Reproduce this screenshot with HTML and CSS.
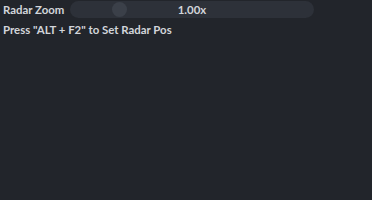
FILE: index.html
```html
<!DOCTYPE html>
<html>
<head>
<meta charset="utf-8">
<link rel="stylesheet" href="styles.css">
</head>
<body>
<div class="panel">
  <div class="row">
    <span class="label">Radar Zoom</span>
    <div class="slider">
      <span class="grab"></span>
      <span class="value">1.00x</span>
    </div>
  </div>
  <div class="hint">Press "ALT + F2" to Set Radar Pos</div>
</div>
</body>
</html>
```
FILE: styles.css
```css
html, body {
  margin: 0;
  padding: 0;
  background: #22252b;
  width: 372px;
  height: 200px;
  overflow: hidden;
}
.panel {
  padding: 1px 0 0 3px;
  font-family: "Lato", sans-serif;
  font-size: 11.4px;
  font-weight: 700;
  color: #d2d5da;
}
.row {
  display: flex;
  align-items: center;
  height: 17px;
}
.label {
  width: 67px;
  white-space: nowrap;
}
.slider {
  position: relative;
  width: 244px;
  height: 17px;
  border-radius: 9px;
  background: #2d3139;
  display: flex;
  align-items: center;
  justify-content: center;
}
.grab {
  position: absolute;
  left: 42px;
  top: 1px;
  width: 15px;
  height: 15px;
  border-radius: 50%;
  background: #3b4049;
}
.value {
  position: relative;
}
.hint {
  height: 19px;
  line-height: 19px;
  margin-top: 2px;
  white-space: nowrap;
}
```
